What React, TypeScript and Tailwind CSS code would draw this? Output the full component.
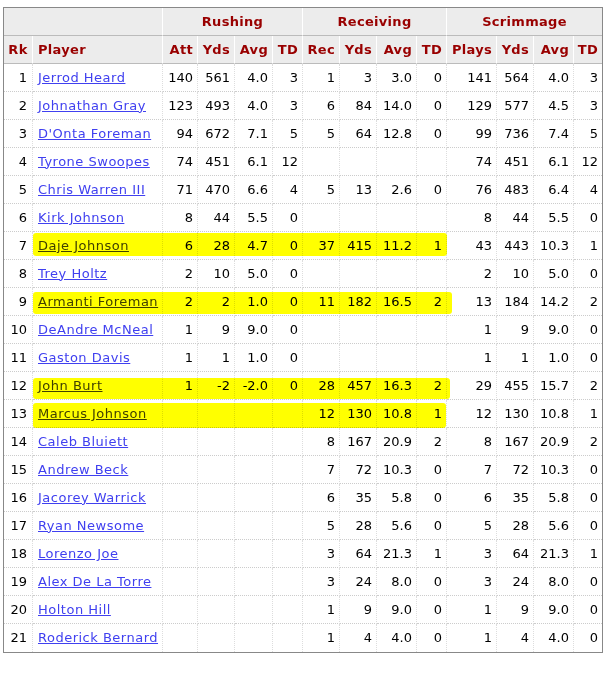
import React from 'react'

type Row = {
    rk: number
    name: string
    rush: (string | number)[]
    rec: (string | number)[]
    scrim: (string | number)[]
    hl?: { top: number, h: number, w: number }
}

const E = ["", "", "", ""];

const rows: Row[] = [
    {rk: 1, name: "Jerrod Heard", rush: [140, 561, "4.0", 3], rec: [1, 3, "3.0", 0], scrim: [141, 564, "4.0", 3]},
    {rk: 2, name: "Johnathan Gray", rush: [123, 493, "4.0", 3], rec: [6, 84, "14.0", 0], scrim: [129, 577, "4.5", 3]},
    {rk: 3, name: "D'Onta Foreman", rush: [94, 672, "7.1", 5], rec: [5, 64, "12.8", 0], scrim: [99, 736, "7.4", 5]},
    {rk: 4, name: "Tyrone Swoopes", rush: [74, 451, "6.1", 12], rec: E, scrim: [74, 451, "6.1", 12]},
    {rk: 5, name: "Chris Warren III", rush: [71, 470, "6.6", 4], rec: [5, 13, "2.6", 0], scrim: [76, 483, "6.4", 4]},
    {rk: 6, name: "Kirk Johnson", rush: [8, 44, "5.5", 0], rec: E, scrim: [8, 44, "5.5", 0]},
    {rk: 7, name: "Daje Johnson", rush: [6, 28, "4.7", 0], rec: [37, 415, "11.2", 1], scrim: [43, 443, "10.3", 1], hl: {top: 1, h: 23, w: 414}},
    {rk: 8, name: "Trey Holtz", rush: [2, 10, "5.0", 0], rec: E, scrim: [2, 10, "5.0", 0]},
    {rk: 9, name: "Armanti Foreman", rush: [2, 2, "1.0", 0], rec: [11, 182, "16.5", 2], scrim: [13, 184, "14.2", 2], hl: {top: 4, h: 22, w: 419}},
    {rk: 10, name: "DeAndre McNeal", rush: [1, 9, "9.0", 0], rec: E, scrim: [1, 9, "9.0", 0]},
    {rk: 11, name: "Gaston Davis", rush: [1, 1, "1.0", 0], rec: E, scrim: [1, 1, "1.0", 0]},
    {rk: 12, name: "John Burt", rush: [1, -2, "-2.0", 0], rec: [28, 457, "16.3", 2], scrim: [29, 455, "15.7", 2], hl: {top: 6, h: 21, w: 417}},
    {rk: 13, name: "Marcus Johnson", rush: E, rec: [12, 130, "10.8", 1], scrim: [12, 130, "10.8", 1], hl: {top: 3, h: 25, w: 413}},
    {rk: 14, name: "Caleb Bluiett", rush: E, rec: [8, 167, "20.9", 2], scrim: [8, 167, "20.9", 2]},
    {rk: 15, name: "Andrew Beck", rush: E, rec: [7, 72, "10.3", 0], scrim: [7, 72, "10.3", 0]},
    {rk: 16, name: "Jacorey Warrick", rush: E, rec: [6, 35, "5.8", 0], scrim: [6, 35, "5.8", 0]},
    {rk: 17, name: "Ryan Newsome", rush: E, rec: [5, 28, "5.6", 0], scrim: [5, 28, "5.6", 0]},
    {rk: 18, name: "Lorenzo Joe", rush: E, rec: [3, 64, "21.3", 1], scrim: [3, 64, "21.3", 1]},
    {rk: 19, name: "Alex De La Torre", rush: E, rec: [3, 24, "8.0", 0], scrim: [3, 24, "8.0", 0]},
    {rk: 20, name: "Holton Hill", rush: E, rec: [1, 9, "9.0", 0], scrim: [1, 9, "9.0", 0]},
    {rk: 21, name: "Roderick Bernard", rush: E, rec: [1, 4, "4.0", 0], scrim: [1, 4, "4.0", 0]},
];

const widths = [29, 130, 35, 37, 38, 30, 37, 37, 40, 30, 50, 37, 40, 28];
const subHeads = ["Att", "Yds", "Avg", "TD", "Rec", "Yds", "Avg", "TD", "Plays", "Yds", "Avg", "TD"];

// header cell
const th = "h-[28px] p-0 bg-[#ececec] text-[#990000] font-bold tracking-[0.3px] border-r border-b border-r-white border-b-[#bbbbbb] last:border-r-0";
// body cell borders
const cell = "h-[28px] p-0 border-r border-b border-r-[#dddddd] border-b-[#cccccc] border-dotted border-r-solid last:border-r-0";

export default function App() {
    return (
        <div className="pt-[7px] pl-[3px] bg-white min-h-[673px]" style={{fontFamily: '"DejaVu Sans", Verdana, sans-serif'}}>
            <table className="table-fixed w-[600px] border-separate border-spacing-0 border border-[#888888] text-[13px] text-black">
                <colgroup>
                    {widths.map((w, i) => <col key={i} style={{width: w}}/>)}
                </colgroup>
                <thead>
                <tr>
                    <th colSpan={2} className={th}></th>
                    <th colSpan={4} className={th + " text-center"}>Rushing</th>
                    <th colSpan={4} className={th + " text-center"}>Receiving</th>
                    <th colSpan={4} className={th + " text-center"}>Scrimmage</th>
                </tr>
                <tr>
                    <th className={th + " text-center"}>Rk</th>
                    <th className={th + " text-left pl-[5px]"}>Player</th>
                    {subHeads.map((h, i) => <th key={i} className={th + " text-right pr-[4px]"}>{h}</th>)}
                </tr>
                </thead>
                <tbody>
                {rows.map((r) => (
                    <tr key={r.rk} className="[&:last-child>td]:border-b-0">
                        <td className={cell + " text-right pr-[5px]"}>{r.rk}</td>
                        <td className={cell + " relative text-left pl-[5px] whitespace-nowrap"}>
                            <a href="#" className="text-[#4040f0] underline tracking-[0.5px]">{r.name}</a>
                            {r.hl && <div
                                className="absolute left-0 bg-[#ffff00] mix-blend-multiply rounded-[3px] pointer-events-none"
                                style={{top: r.hl.top, height: r.hl.h, width: r.hl.w}}/>}
                        </td>
                        {[...r.rush, ...r.rec, ...r.scrim].map((v, i) => (
                            <td key={i} className={cell + " text-right pr-[4px]"}>{v}</td>
                        ))}
                    </tr>
                ))}
                </tbody>
            </table>
        </div>
    );
}
